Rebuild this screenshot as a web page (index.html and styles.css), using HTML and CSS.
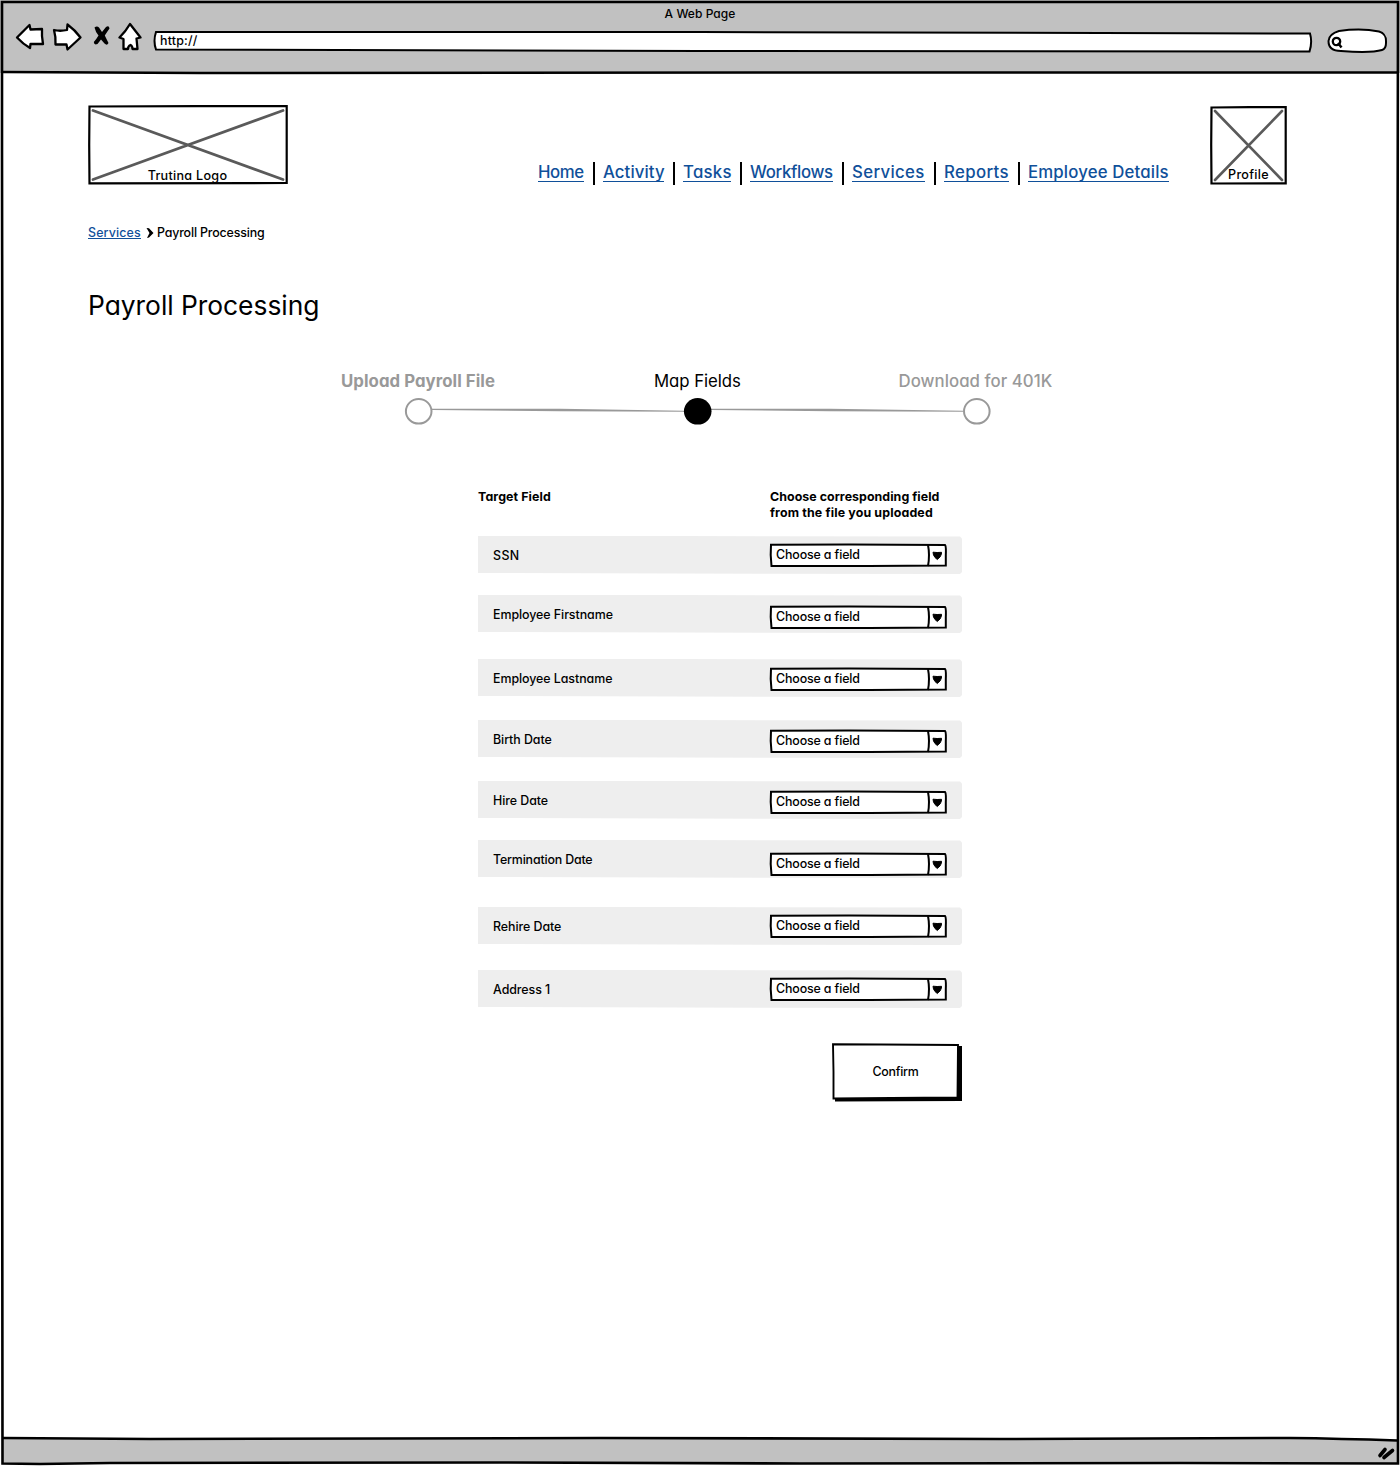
FILE: index.html
```
<!DOCTYPE html>
<html lang="en">
<head>
<meta charset="utf-8">
<title>A Web Page</title>
<link rel="stylesheet" href="styles.css">
</head>
<body>
<svg class="defs" width="0" height="0" aria-hidden="true">
  <symbol id="combo" viewBox="0 0 178 25">
    <path d="M2 1.800L80 1.500L176 2Q177.200 3 176.800 12L176.800 22.500L100 23L2.500 23L1.700 12Z" fill="#fff" stroke="#000" stroke-width="2"/>
    <path d="M159 2Q161 12 159 23" fill="none" stroke="#000" stroke-width="2"/>
    <path d="M164 9.200Q168 9.800 172.500 9.300Q173 11 171 14L168.300 16.500L166 14.500Q164 12 164 9.200Z" fill="#000" stroke="#000"/>
  </symbol>
  <symbol id="band" viewBox="0 0 484 38">
    <path d="M0 0H200L482 .5L484 2.500V36L482 38L200 37.500L0 37Z" fill="#eee"/>
  </symbol>
</svg>
<div class="browser">
  <header class="chrome">
    <div class="title">A Web Page</div>
    <div class="toolbar">
      <svg class="buttons" width="128" height="30" viewBox="14 22 128 30" fill="#fff" stroke="#000" stroke-width="2.300" stroke-linejoin="round">
        <path d="M17 37.500L29.500 25L30.500 29.500L42 29Q41.500 36 43 44L30.500 44L30 48Q23 44 17 37.500Z"/>
        <path d="M54 30Q60 31.500 67 30L67.500 24.500Q75 30 80.500 37.500L67.500 49.500L66.500 44.500L55.500 44.500Q56 37 54 30Z"/>
        <path d="M94.500 27.500Q97 25.500 99 27.500L102 32L106 27Q109 25 109.500 28.500Q107 32 104.800 35.500Q107 40 108.500 43Q107 46 104.500 43.500L101 39.500L97.500 44Q94 45.500 93.800 42Q96.500 39 98.500 35.500Q95.500 32 94.500 27.500Z" fill="#000" stroke="none"/>
        <path d="M130 24L140.500 37.500L136.500 38.500L137.500 49L132.500 49Q132.500 46 130.500 45Q128 46 128 49L123.500 49L123.500 39L119.500 37.500Q126 31 130 24Z"/>
      </svg>
      <div class="address">
        <svg width="1160" height="24" viewBox="153 30 1160 24"><path d="M156 32L700 32L1310 33.500Q1312.500 42 1309.500 51.500L700 51L156 49.500Q153 41 156 32Z" fill="#fff" stroke="#000" stroke-width="2"/></svg>
        <span>http://</span>
      </div>
      <svg class="search" width="62" height="26" viewBox="1327 28 62 26" fill="#fff" stroke="#000" stroke-width="2">
        <path d="M1339 31Q1361 28 1379 31.500C1387 34 1386 40 1386 43Q1386 49 1382 50C1372 53 1354 52 1341 51C1332 51 1328.500 47 1328.500 41Q1329 34 1339 31Z"/>
        <circle cx="1336.500" cy="41.500" r="3.700" stroke-width="2.300"/><path d="M1338 43L1341.500 47.500" stroke-width="2.500"/>
      </svg>
    </div>
  </header>

  <main class="page">
    <div class="masthead">
      <div class="placeholder logo">
        <svg width="200" height="80" viewBox="0 0 200 80" fill="none" stroke="#000" stroke-width="2.200"><path d="M5 5.500L195 74.500M195 5.500L5 74.500" stroke="#5a5a5a" stroke-width="2.800" stroke-linecap="round"/><path d="M1.500 1.500L110 1.200H198.700V78L1.500 78.300L1.200 40Z"/></svg>
        <span>Trutina Logo</span>
      </div>
      <nav class="menu">
        <a class="home" href="#">Home</a><a class="activity" href="#">Activity</a><a class="tasks" href="#">Tasks</a><a class="workflows" href="#">Workflows</a><a class="services" href="#">Services</a><a class="reports" href="#">Reports</a><a class="details" href="#">Employee Details</a>
      </nav>
      <div class="placeholder profile">
        <svg width="78" height="80" viewBox="0 0 78 80" fill="none" stroke="#000" stroke-width="2.200"><path d="M5 6L72 75M72 6L5 75" stroke="#5a5a5a" stroke-width="2.600" stroke-linecap="round"/><path d="M1.500 2.500L40 2.200L75.700 2.200V78.300L1.500 78.500L1.200 40Z"/></svg>
        <span>Profile</span>
      </div>
    </div>

    <div class="crumbs">
      <a href="#">Services</a>
      <svg width="8" height="10" viewBox="0 0 8 10"><path d="M.5 0L3 .3L7.500 5L3 9.500L1 10L3.500 5Z"/></svg>
      <span>Payroll Processing</span>
    </div>
    <h1>Payroll Processing</h1>

    <section class="stepper">
      <ol class="labels"><li class="done">Upload Payroll File</li><li class="current">Map Fields</li><li class="next">Download for 401K</li></ol>
      <svg width="588" height="30" viewBox="403 396 588 30">
        <g fill="#999"><path d="M432 408.700L560 408.700L684 410.700V411.700L560 411.200L432 410Z"/><path d="M711 408.700L830 408.700L963 410.700V411.700L830 411.200L711 410Z"/></g>
        <g fill="#fff" stroke="#999" stroke-width="2"><ellipse cx="418.700" cy="411.300" rx="12.800" ry="12.300"/><ellipse cx="976.800" cy="411.300" rx="12.800" ry="12.300"/></g>
        <ellipse cx="697.700" cy="411.300" rx="13.800" ry="13.300"/>
      </svg>
    </section>

    <section class="mapping">
      <div class="headings"><span>Target Field</span><span><b>Choose corresponding field</b><b class="second">from the file you uploaded</b></span></div>
      <div class="row ssn"><svg class="band"><use href="#band"/></svg><span class="field">SSN</span><div class="select"><svg><use href="#combo"/></svg><span>Choose a field</span></div></div>
      <div class="row first"><svg class="band"><use href="#band"/></svg><span class="field">Employee Firstname</span><div class="select"><svg><use href="#combo"/></svg><span>Choose a field</span></div></div>
      <div class="row last"><svg class="band"><use href="#band"/></svg><span class="field">Employee Lastname</span><div class="select"><svg><use href="#combo"/></svg><span>Choose a field</span></div></div>
      <div class="row birth"><svg class="band"><use href="#band"/></svg><span class="field">Birth Date</span><div class="select"><svg><use href="#combo"/></svg><span>Choose a field</span></div></div>
      <div class="row hire"><svg class="band"><use href="#band"/></svg><span class="field">Hire Date</span><div class="select"><svg><use href="#combo"/></svg><span>Choose a field</span></div></div>
      <div class="row termination"><svg class="band"><use href="#band"/></svg><span class="field">Termination Date</span><div class="select"><svg><use href="#combo"/></svg><span>Choose a field</span></div></div>
      <div class="row rehire"><svg class="band"><use href="#band"/></svg><span class="field">Rehire Date</span><div class="select"><svg><use href="#combo"/></svg><span>Choose a field</span></div></div>
      <div class="row address1"><svg class="band"><use href="#band"/></svg><span class="field">Address 1</span><div class="select"><svg><use href="#combo"/></svg><span>Choose a field</span></div></div>
      <button class="confirm" type="button">
        <svg width="131" height="60" viewBox="0 0 131 60"><path d="M126 4H131V59L4 59.500V55H126Z"/><path d="M2 2.300L50 2.500L127 3L126.500 55.500L60 56L2.500 56.500L2.500 30Z" fill="#fff" stroke="#000" stroke-width="1.900"/></svg>
        <span>Confirm</span>
      </button>
    </section>
  </main>

  <svg class="frame" width="1400" height="1466" viewBox="0 0 1400 1466" fill="none" stroke="#000" stroke-width="2.600">
    <path d="M3 1438.500L500 1438H1290Q1340 1438.500 1397 1440.500V1463H3Z" fill="#c1c1c1" stroke="none"/>
    <path d="M2 2H1398L1397.500 300L1398 1463.500L1180 1463L800 1463.500L500 1462.500L110 1463L40 1464L2.500 1463.500L2 900L2.500 500L2 150Z"/>
    <path d="M3 72L200 73L800 72.500L1397 72.500"/>
    <path d="M3 1438L150 1439L600 1438L1000 1439L1290 1438Q1340 1438.500 1397 1440.500"/>
    <path d="M1380 1455.500L1385 1449.500M1384 1457.500L1392.500 1450.500" stroke-width="3.600" stroke-linecap="round"/>
  </svg>
</div>
</body>
</html>
```
FILE: styles.css
```
* { box-sizing: border-box; }
body {
  margin: 0;
  background: #fff;
  color: #000;
  font-family: Inter, "Noto Sans", sans-serif;
  font-size: 12.4px;
  font-weight: 450;
  line-height: 16px;
  letter-spacing: 0;
  white-space: nowrap;
}
body, button { font-feature-settings: "cv11"; }
svg { display: block; }
.defs { position: absolute; }
.browser { position: relative; width: 1400px; height: 1466px; overflow: hidden; }
.frame { position: absolute; inset: 0; pointer-events: none; }

.chrome { height: 73px; padding-top: 6px; background: #c1c1c1; }
.title { font-size: 12px; text-align: center; letter-spacing: 0.05px; }
.toolbar { display: flex; padding-left: 14px; }
.address { display: grid; margin: 8px 14px 0 11px; }
.address > *, .placeholder > *, .row > *, .select > *, .confirm > * { grid-area: 1 / 1; }
.address span { padding: 3px 0 0 7px; letter-spacing: 0.2px; }
.search { margin-top: 6px; }

.page { padding: 32px 88px 0; }
.masthead { display: flex; height: 80px; }
.placeholder { display: grid; }
.placeholder span { align-self: end; justify-self: center; padding: 0 1px 1px 0; font-size: 12.6px; letter-spacing: 0.28px; }
.logo { width: 200px; }
.profile { width: 78px; margin-left: 41px; }
.profile span { padding-bottom: 2px; }
.menu { display: flex; align-items: flex-start; margin: 57px 0 0 250px; font-size: 16.8px; line-height: 21px; color: #10509a; }
.menu a { height: 20px; color: inherit; text-decoration: none; border-bottom: 1px solid #10509a; }
.menu a + a { margin-left: 19px; }
.menu a + a::before { content: ""; float: left; width: 2px; height: 23px; margin: 0 0 -4px -10px; background: #000; }
.home { width: 46px; letter-spacing: -0.45px; }
.activity { width: 61px; letter-spacing: 0.08px; }
.tasks { width: 48px; letter-spacing: 0.25px; }
.workflows { width: 83px; letter-spacing: -0.32px; }
.services { width: 73px; letter-spacing: 0.35px; }
.reports { width: 65px; letter-spacing: 0.35px; }
.details { width: 141px; letter-spacing: 0.15px; }

.crumbs { display: flex; align-items: flex-start; margin-top: 39px; line-height: 18px; }
.crumbs a { width: 53px; height: 15px; color: #10509a; text-decoration: none; border-bottom: 1px solid #10509a; letter-spacing: 0.15px; }
.crumbs svg { margin: 4px 3px 0 5px; }
.crumbs span { height: 16px; letter-spacing: -0.15px; }
h1 { margin: 47px 0 0; font-size: 26.4px; line-height: 36px; font-weight: 400; letter-spacing: -0.03px; }

.stepper { width: 730px; margin: 47px 0 0 247px; }
.labels { display: flex; width: 730px; height: 22px; margin: 0; padding: 0 0 0 6px; list-style: none; font-size: 16.8px; font-weight: 400; line-height: 22px; }
.labels li { color: #999; letter-spacing: 0.15px; }
.labels .done { width: 313px; font-weight: 700; letter-spacing: 0.05px; }
.labels .current { width: 244.500px; color: #000; letter-spacing: -0.05px; }
.labels .next { font-weight: 450; letter-spacing: 0.05px; }
.stepper svg { margin: 4px 0 0 68px; }

.mapping { width: 484px; margin: 62px 0 0 390px; }
.headings { display: grid; grid-template-columns: 292px 1fr; height: 48px; padding-top: 1px; font-weight: 700; letter-spacing: 0.1px; }
.headings b { display: block; font-weight: 700; letter-spacing: 0.05px; }
.headings .second { letter-spacing: 0.15px; }
.row { display: grid; grid-template-columns: 484px; height: 38px; margin-bottom: 21px; align-items: start; }
.band { width: 484px; height: 38px; }
.field { padding: 12px 0 0 15px; letter-spacing: -0.05px; }
.select { display: grid; width: 178px; height: 25px; margin: 7px 0 0 291px; }
.select svg { width: 178px; height: 25px; }
.select span { padding: 4px 0 0 7px; letter-spacing: -0.13px; }
.ssn .field { letter-spacing: 0.4px; }
.first { margin-bottom: 26px; }
.first .select { margin-top: 10px; }
.last { margin-bottom: 23px; }
.last .select { margin-top: 8px; }
.birth { margin-bottom: 23px; }
.birth .select, .hire .select { margin-top: 9px; }
.termination { margin-bottom: 29px; }
.termination .select { margin-top: 12px; }
.rehire { margin-bottom: 25px; }
.termination .field { letter-spacing: -0.17px; }
.address1 { margin-bottom: 35px; }
.confirm { display: grid; width: 131px; height: 60px; margin-left: 353px; padding: 0; border: 0; background: none; color: #000; font-family: inherit; font-size: 12.4px; font-weight: 450; line-height: 16px; letter-spacing: -0.25px; }
.confirm svg { margin-top: -1px; }
.confirm span { align-self: start; justify-self: center; padding: 21px 2px 0 0; }
```
